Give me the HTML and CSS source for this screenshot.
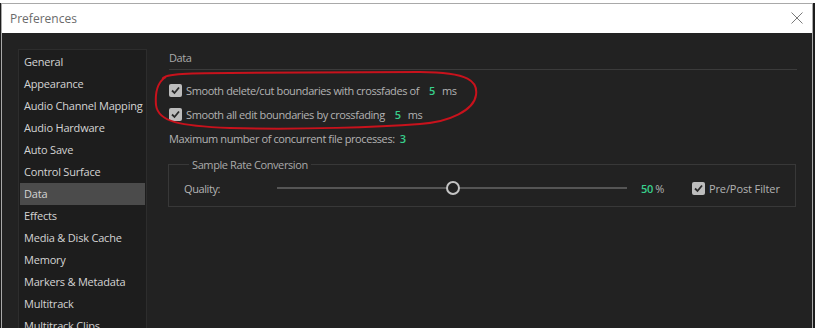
FILE: index.html
```html
<!DOCTYPE html>
<html lang="en">
<head>
  <meta charset="UTF-8">
  <title>Preferences</title>
  <link rel="stylesheet" href="styles.css">
</head>
<body>
  <div class="window">
    <div class="titlebar">
      <span class="title">Preferences</span>
      <svg class="close" width="12" height="12" viewBox="0 0 12 12">
        <path d="M0.5 0.5 L11.5 11.5 M11.5 0.5 L0.5 11.5" stroke="#7a7a7a" stroke-width="1" fill="none"/>
      </svg>
    </div>

    <div class="dialog">
      <ul class="sidebar">
        <li>General</li>
        <li>Appearance</li>
        <li>Audio Channel Mapping</li>
        <li>Audio Hardware</li>
        <li>Auto Save</li>
        <li>Control Surface</li>
        <li class="selected">Data</li>
        <li>Effects</li>
        <li>Media &amp; Disk Cache</li>
        <li>Memory</li>
        <li>Markers &amp; Metadata</li>
        <li>Multitrack</li>
        <li>Multitrack Clips</li>
      </ul>

      <div class="panel">
        <div class="panel-header">Data</div>

        <div class="row check-row">
          <span class="checkbox"><svg width="13" height="13" viewBox="0 0 13 13"><path d="M3 6.5 L5.5 9 L10 3.5" stroke="#2a2a2a" stroke-width="1.8" fill="none"/></svg></span>
          <span>Smooth delete/cut boundaries with crossfades of</span>
          <span class="value">5</span>
          <span>ms</span>
        </div>
        <div class="row check-row">
          <span class="checkbox"><svg width="13" height="13" viewBox="0 0 13 13"><path d="M3 6.5 L5.5 9 L10 3.5" stroke="#2a2a2a" stroke-width="1.8" fill="none"/></svg></span>
          <span>Smooth all edit boundaries by crossfading</span>
          <span class="value">5</span>
          <span>ms</span>
        </div>
        <div class="row max-row">
          <span>Maximum number of concurrent file processes:</span>
          <span class="value">3</span>
        </div>

        <fieldset class="group">
          <legend>Sample Rate Conversion</legend>
          <div class="quality">
            <span class="quality-label">Quality:</span>
            <div class="slider"><span class="thumb"></span></div>
            <span class="percent"><span class="value">50</span> %</span>
            <span class="filter">
              <span class="checkbox"><svg width="13" height="13" viewBox="0 0 13 13"><path d="M3 6.5 L5.5 9 L10 3.5" stroke="#2a2a2a" stroke-width="1.8" fill="none"/></svg></span>
              Pre/Post Filter
            </span>
          </div>
        </fieldset>

        <svg class="scribble" width="340" height="70" viewBox="150 68 340 70">
          <path d="M163 80 C160 74 185 73 230 73 L420 72 C470 72 478 82 476 95 C474 110 450 122 420 124 C380 127 300 130 230 128 C180 126 158 122 156 105 C155 92 157 82 166 77"
                stroke="#c8121c" stroke-width="2" fill="none"/>
        </svg>
      </div>
    </div>
  </div>
</body>
</html>
```

FILE: styles.css
```css
html {
  background: #1c1c1c;
}

body {
  margin: 0;
  padding-top: 3px;
  background: linear-gradient(#fff 0, #fff 3px, #1c1c1c 3px);
  height: 325px;
  overflow: hidden;
  font-family: "Open Sans", "Noto Sans", sans-serif;
}

.window {
  margin-left: 1px;
  width: 810px;
  height: 340px;
  border: 1px solid #a9a9a9;
  border-bottom: none;
  background: #222222;
}

/* title bar */
.titlebar {
  height: 29px;
  background: #ffffff;
  display: flex;
  align-items: center;
  justify-content: space-between;
  padding: 0 9px 0 8px;
}

.title {
  font-size: 12px;
  color: #6b6b6b;
}

.close {
  margin-top: -2px;
}

/* dialog body */
.dialog {
  display: flex;
  padding: 16px 0 0 16px;
  gap: 22px;
}

.sidebar {
  list-style: none;
  margin: 0;
  padding: 1px 1px;
  width: 125px;
  height: 300px;
  background: #1d1d1d;
  border: 1px solid #2d2d2d;
  flex: none;
}

.sidebar li {
  height: 22px;
  line-height: 22px;
  padding-left: 4px;
  font-size: 11px;
  letter-spacing: -0.2px;
  color: #d4d4d4;
  white-space: nowrap;
}

.sidebar li.selected {
  background: #4b4b4b;
}

.panel {
  position: relative;
  width: 628px;
  font-size: 11px;
  letter-spacing: -0.4px;
  color: #b3b3b3;
}

.panel-header {
  height: 20px;
  line-height: 18px;
  border-bottom: 1px solid #3b3b3b;
  color: #aaaaaa;
  margin-bottom: 12px;
}

.row {
  display: flex;
  align-items: center;
  height: 16px;
  gap: 4px;
}

.check-row {
  margin-bottom: 8px;
}

.check-row .value {
  margin: 0 3px 0 6px;
}

.max-row {
  margin-top: 1px;
  gap: 5px;
}

.value {
  color: #38cf8c;
  font-weight: 600;
}

.checkbox {
  width: 13px;
  height: 13px;
  background: #bdbdbd;
  border-radius: 2px;
  display: inline-block;
  flex: none;
}

.checkbox svg {
  display: block;
}

/* sample rate group */
.group {
  margin: 11px 1px 0 -1px;
  padding: 8px 14px 10px 15px;
  border: 1px solid #383838;
}

.group legend {
  padding: 0 3px;
  margin-left: 5px;
  color: #aaaaaa;
}

.quality {
  display: flex;
  align-items: center;
  height: 16px;
}

.quality-label {
  width: 93px;
}

.slider {
  position: relative;
  width: 350px;
  height: 2px;
  background: #555555;
}

.thumb {
  position: absolute;
  left: 169px;
  top: -6px;
  width: 10px;
  height: 10px;
  border: 2px solid #c4c4c4;
  border-radius: 50%;
  background: #222222;
}

.percent {
  margin-left: 14px;
}

.filter {
  display: flex;
  align-items: center;
  gap: 4px;
  margin-left: 28px;
  letter-spacing: -0.1px;
}

.scribble {
  position: absolute;
  left: -19px;
  top: 19px;
}
```
